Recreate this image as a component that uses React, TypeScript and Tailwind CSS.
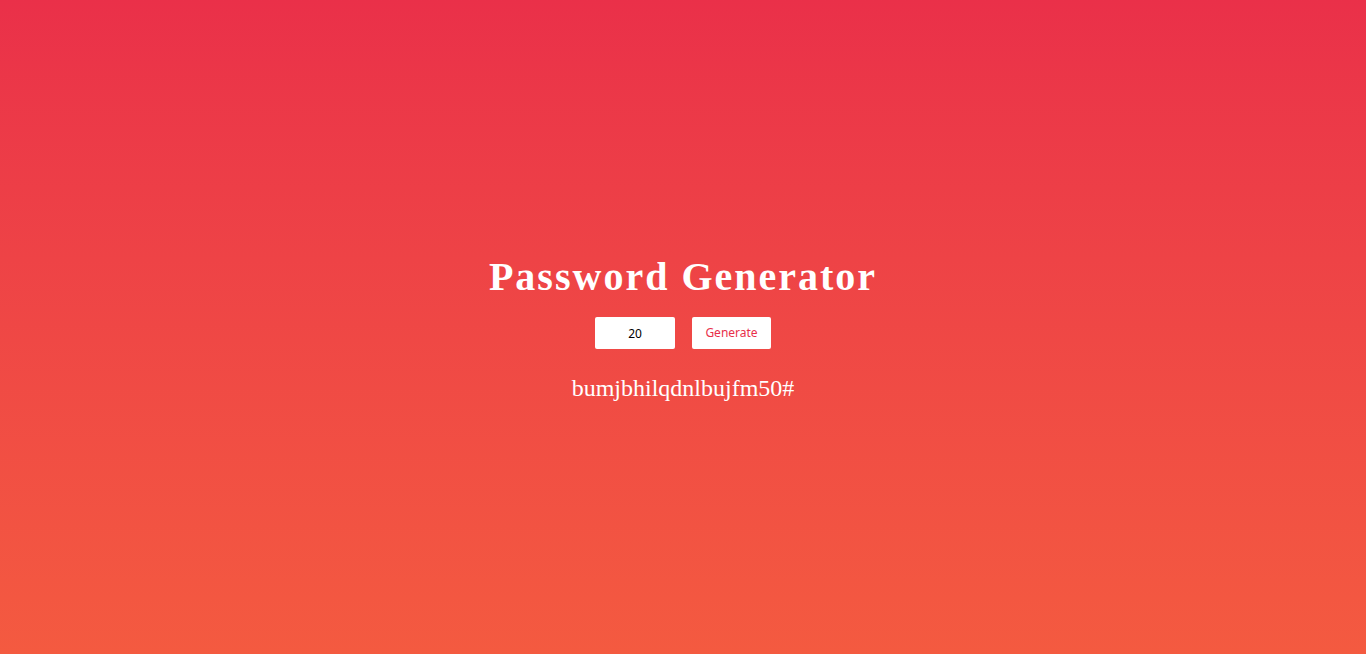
export default function App() {
  return (
    <div className="min-h-screen w-full bg-gradient-to-b from-[#ea3049] to-[#f45a40] flex flex-col items-center justify-center pt-[2px]">
      <h1 className="text-[40px] leading-[46px] font-bold tracking-[2px] text-white font-['Liberation_Serif',serif]">
        Password Generator
      </h1>
      <div className="flex gap-[17px] mt-[17px]">
        <input
          type="text"
          defaultValue="20"
          className="w-[80px] h-[32px] rounded-[2px] bg-white text-center text-[12px] text-black font-['Noto_Sans',sans-serif] outline-none"
        />
        <button className="w-[79px] h-[32px] rounded-[2px] bg-white text-[12px] text-[#e8304a] font-['Noto_Sans',sans-serif]">
          Generate
        </button>
      </div>
      <p className="mt-[25px] text-[24px] leading-[28px] text-white font-['Liberation_Serif',serif]">
        bumjbhilqdnlbujfm50#
      </p>
    </div>
  );
}
